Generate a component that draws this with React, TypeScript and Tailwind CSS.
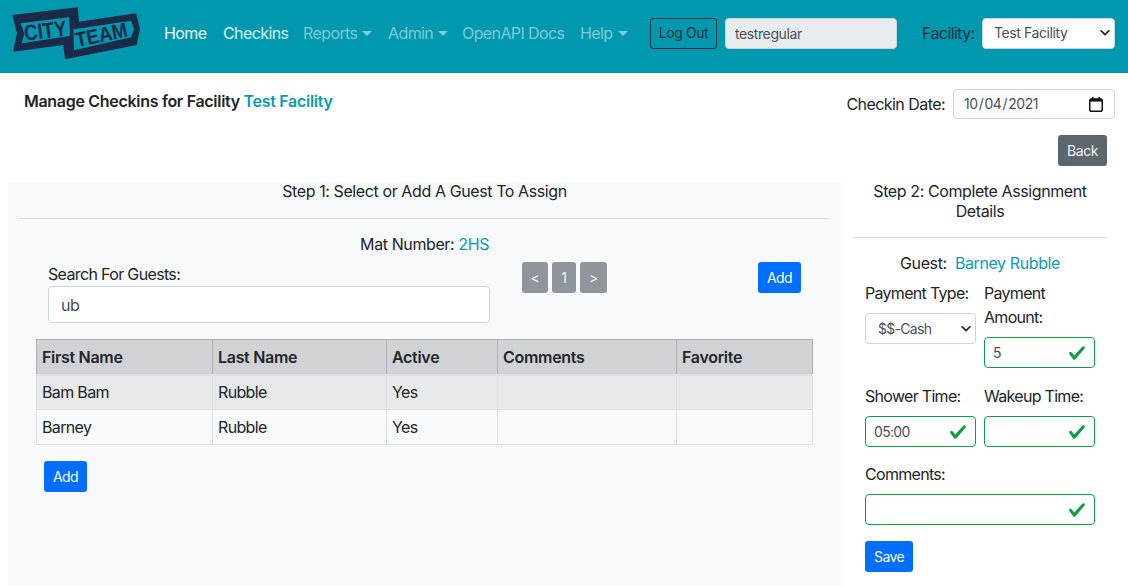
import React from "react";

const Chevron = () => (
  <svg viewBox="0 0 10 7" className="absolute right-[5px] top-1/2 -translate-y-1/2 w-[10px] h-[7px] pointer-events-none">
    <path fill="none" stroke="#2b3035" strokeLinecap="round" strokeLinejoin="round" strokeWidth="1.9" d="M1.2 1.4L5 5.2l3.8-3.8" />
  </svg>
);

const Check = () => (
  <svg viewBox="0 0 8 8" className="absolute right-[9px] top-1/2 -translate-y-1/2 w-[18px] h-[18px] pointer-events-none">
    <path fill="#0f9d48" d="M2.3 6.73L.6 4.53c-.4-1.04.46-1.4 1.1-.8l1.1 1.4 3.4-3.8c.6-.63 1.6-.27 1.2.7l-4 4.6c-.43.5-.8.4-1.1.1z" />
  </svg>
);

const Calendar = () => (
  <svg viewBox="0 0 14 15" className="absolute right-[12px] top-[8px] w-[14px] h-[15px] pointer-events-none">
    <rect x="0.75" y="2" width="12.5" height="12.25" rx="1.8" fill="none" stroke="#111" strokeWidth="1.5" />
    <rect x="0.75" y="2" width="12.5" height="2.6" fill="#111" />
    <rect x="3" y="0" width="1.6" height="3" fill="#111" />
    <rect x="9.4" y="0" width="1.6" height="3" fill="#111" />
  </svg>
);

const Caret = () => (
  <span className="inline-block ml-[5px] align-[3px] w-0 h-0 border-t-[5px] border-x-[5px] border-x-transparent border-t-current" />
);

const ValidInput = ({ value, w }: { value: string; w: string }) => (
  <div className={`relative ${w}`}>
    <input
      readOnly
      value={value}
      className="block w-full h-[31px] border border-[#0f9d48] rounded-[4px] pl-[8px] pr-[30px] text-[14px] text-[#495057] bg-white outline-none"
    />
    <Check />
  </div>
);

const BlueBtn = ({ label, cls, w = "w-[43px]" }: { label: string; cls?: string; w?: string }) => (
  <button className={`${w} h-[31px] bg-[#006fff] text-white text-[14px] tracking-[-0.6px] rounded-[3px] ${cls ?? ""}`}>{label}</button>
);

const PageBtn = ({ label, w }: { label: string; w: string }) => (
  <button className={`${w} h-[31px] bg-[#8f959b] text-[#f1f3f4] text-[14px] rounded-[3px]`}>{label}</button>
);

const cols = ["w-[176px]", "w-[174px]", "w-[111px]", "w-[179px]", "w-[136px]"];
const heads = ["First Name", "Last Name", "Active", "Comments", "Favorite"];
const rows = [
  ["Bam Bam", "Rubble", "Yes", "", ""],
  ["Barney", "Rubble", "Yes", "", ""],
];

const Logo = () => (
  <svg viewBox="0 0 435 198" className="w-[145px] h-[66px] shrink-0 self-start">
    <path fill="#1b2a49" d="M22 45 218 22 222 65 393 40 405 85 395 135 180 178 175 135 24 155 36 100Z" />
    <path fill="#0098ae" d="M46 70 192 52 195 108 50 130 58 100Z" />
    <path fill="#0098ae" d="M205 88 378 62 387 87 378 112 207 151Z" />
    <text x="60" y="122" fontFamily="'Liberation Sans', sans-serif" fontWeight="700" fontSize="66" fill="#1b2a49" transform="rotate(-7 60 122)" textLength="128" lengthAdjust="spacingAndGlyphs">CITY</text>
    <text x="216" y="142" fontFamily="'Liberation Sans', sans-serif" fontWeight="700" fontSize="62" fill="#1b2a49" transform="rotate(-12 216 142)" textLength="158" lengthAdjust="spacingAndGlyphs">TEAM</text>
  </svg>
);

export default function App() {
  return (
    <div className="w-[1128px] h-[586px] overflow-hidden bg-white text-[#212529] text-[16px] leading-[24px] tracking-[-0.4px] font-['Inter',sans-serif]">
      <nav className="h-[73px] bg-[#0098ae] flex items-center pl-[5px] pb-[7px] whitespace-nowrap">
        <Logo />
        <div className="flex items-center ml-[14px] tracking-[-0.6px]">
          <span className="w-[59px] text-[#eefbfd]">Home</span>
          <span className="w-[80px] text-[#d8f2f6]">Checkins</span>
          <span className="w-[85px] text-[#7fcbd6]">Reports<Caret /></span>
          <span className="w-[74px] text-[#7fcbd6]">Admin<Caret /></span>
          <span className="w-[118px] text-[#7fcbd6]">OpenAPI Docs</span>
          <span className="w-[70px] text-[#7fcbd6]">Help<Caret /></span>
        </div>
        <button className="w-[67px] h-[31px] border border-[#212f3d] rounded-[3px] text-[14px] text-[#212f3d]">Log Out</button>
        <input
          readOnly
          value="testregular"
          className="ml-[8px] w-[172px] h-[31px] bg-[#e9ecef] border border-[#ced4da] rounded-[4px] px-[9px] text-[14px] text-[#495057] outline-none"
        />
        <span className="ml-[25px] w-[60px] text-[#212f3d] tracking-[-0.6px]">Facility:</span>
        <div className="relative w-[133px]">
          <select className="block appearance-none w-full h-[31px] bg-white border border-[#ced4da] rounded-[4px] pl-[11px] text-[14px] text-[#495057] outline-none">
            <option>Test Facility</option>
          </select>
          <Chevron />
        </div>
      </nav>

      <div className="flex justify-between pl-[24px] pr-[13px] pt-[16px] h-[62px]">
        <div className="font-semibold tracking-[-0.3px]">
          Manage Checkins for Facility <span className="text-[#0a9cb2]">Test Facility</span>
        </div>
        <div className="flex items-center h-[30px]">
          <span className="mr-[8px] tracking-[-0.55px]">Checkin Date:</span>
          <div className="relative">
            <input
              type="date"
              defaultValue="2021-10-04"
              className="block w-[162px] h-[30px] border border-[#ced4da] rounded-[4px] pl-[9px] pr-[8px] text-[14px] text-[#495057] bg-white outline-none [&::-webkit-calendar-picker-indicator]:opacity-0"
            />
            <Calendar />
          </div>
        </div>
      </div>

      <div className="flex justify-end pr-[21px] h-[47px]">
        <button className="w-[49px] h-[31px] bg-[#5c666d] text-[#f1f3f4] text-[14px] rounded-[3px]">Back</button>
      </div>

      <div className="flex pl-[8px] pr-[21px] gap-[12px]">
        <section className="w-[833px] h-[404px] bg-[#f8f9fa] px-[12px]">
          <div className="text-center leading-[18px]">Step 1: Select or Add A Guest To Assign</div>
          <div className="mt-[18px] border-t border-[#d9dbdd]" />
          <div className="mt-[13px] flex pl-[28px]">
            <div className="w-[442px]">
              <div className="text-right pr-[1px]">Mat Number: <span className="text-[#0a9cb2]">2HS</span></div>
              <div className="mt-[6px] tracking-[-0.65px]">Search For Guests:</div>
              <input
                readOnly
                value="ub"
                className="block w-[442px] h-[37px] bg-white border border-[#ced4da] rounded-[4px] px-[12px] text-[16px] text-[#495057] outline-none"
              />
            </div>
            <div className="ml-[32px] mt-[30px] flex gap-[4px] items-start h-[31px]">
              <PageBtn label="<" w="w-[26px]" />
              <PageBtn label="1" w="w-[24px]" />
              <PageBtn label=">" w="w-[27px]" />
            </div>
            <BlueBtn label="Add" cls="ml-[151px] mt-[30px]" />
          </div>
          <table className="mt-[16px] ml-[16px] border-collapse table-fixed w-[776px]">
            <thead>
              <tr className="bg-[#d1d2d6] h-[35px]">
                {heads.map((h, i) => (
                  <th key={h} className={`${cols[i]} border border-[#b0b2b6] border-b-0 text-left font-semibold tracking-[-0.3px] px-[5px] py-0`}>{h}</th>
                ))}
              </tr>
            </thead>
            <tbody className="border-t-2 border-t-[#dbe0e4]">
              {rows.map((r, ri) => (
                <tr key={ri} className={`h-[35px] ${ri === 0 ? "bg-[#e8e9eb]" : ""}`}>
                  {r.map((c, i) => (
                    <td key={i} className="border border-[#dee2e6] px-[5px] py-0 tracking-[-0.65px]">{c}</td>
                  ))}
                </tr>
              ))}
            </tbody>
          </table>
          <BlueBtn label="Add" cls="block mt-[16px] ml-[24px]" />
        </section>

        <aside className="w-[254px]">
          <div className="text-center leading-[20px] -mt-[1px]">Step 2: Complete Assignment Details</div>
          <div className="mt-[16px] border-t border-[#d9dbdd]" />
          <div className="px-[12px] tracking-[-0.7px]">
            <div className="mt-[13px] text-center tracking-[-0.4px]">Guest:&nbsp; <span className="text-[#0a9cb2]">Barney Rubble</span></div>
            <div className="flex gap-[8px] mt-[6px] h-[103px]">
              <div className="w-[111px]">
                <div>Payment Type:</div>
                <div className="relative mt-[8px]">
                  <select className="block appearance-none w-full h-[31px] bg-white border border-[#ced4da] rounded-[4px] pl-[12px] text-[14px] text-[#495057] outline-none">
                    <option>$$-Cash</option>
                  </select>
                  <Chevron />
                </div>
              </div>
              <div className="w-[111px]">
                <div>Payment Amount:</div>
                <ValidInput value="5" w="w-full mt-[8px]" />
              </div>
            </div>
            <div className="flex gap-[8px]">
              <div className="w-[111px]">
                <div>Shower Time:</div>
                <ValidInput value="05:00" w="w-full mt-[8px]" />
              </div>
              <div className="w-[111px]">
                <div>Wakeup Time:</div>
                <ValidInput value="" w="w-full mt-[8px]" />
              </div>
            </div>
            <div className="mt-[15px]">Comments:</div>
            <ValidInput value="" w="w-[230px] mt-[8px]" />
            <BlueBtn label="Save" w="w-[48px]" cls="block mt-[16px]" />
          </div>
        </aside>
      </div>
    </div>
  );
}
